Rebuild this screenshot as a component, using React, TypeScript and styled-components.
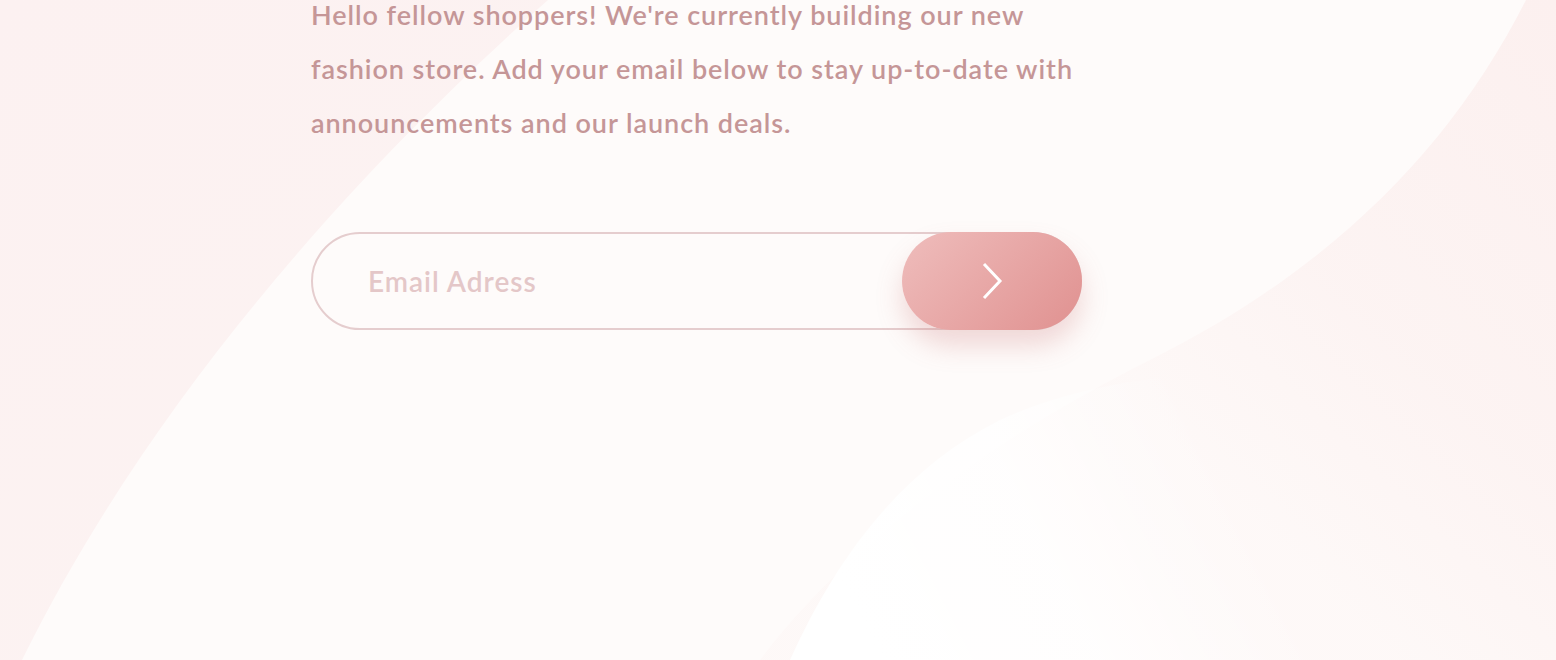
import styled, { createGlobalStyle } from "styled-components";

const GlobalStyle = createGlobalStyle`
  html, body {
    margin: 0;
    padding: 0;
  }
  body {
    font-family: "Lato", "Open Sans", sans-serif;
    background: #fefbfa;
    overflow: hidden;
  }
`;

const Page = styled.main`
  position: relative;
  width: 1556px;
  height: 660px;
  overflow: hidden;
  background: #fefbfa;
`;

const Pattern = styled.svg`
  position: absolute;
  inset: 0;
  width: 100%;
  height: 100%;
  z-index: 0;
  pointer-events: none;
`;

const Content = styled.section`
  position: relative;
  z-index: 1;
  display: flex;
  flex-direction: column;
  width: 771px;
  padding: 0 0 0 311px;
  margin-top: -12px;
`;

const Intro = styled.p`
  margin: 0;
  color: #c59697;
  font-size: 27px;
  line-height: 54px;
  font-weight: 600;
  letter-spacing: 0.95px;
  white-space: nowrap;
`;

const Form = styled.form`
  display: grid;
  grid-template-areas: "stack";
  margin-top: 82px;
  height: 98px;
`;

const EmailInput = styled.input`
  grid-area: stack;
  box-sizing: border-box;
  width: 100%;
  height: 98px;
  border: 2px solid #e5cdce;
  border-radius: 49px;
  background: transparent;
  padding: 0 200px 0 55px;
  font-family: "Lato", "Open Sans", sans-serif;
  font-size: 28px;
  font-weight: 600;
  letter-spacing: 1px;
  color: #c59697;
  outline: none;

  &::placeholder {
    color: #e4c7c8;
    opacity: 1;
  }
`;

const SubmitButton = styled.button`
  grid-area: stack;
  justify-self: end;
  width: 180px;
  height: 98px;
  border: none;
  border-radius: 49px;
  background: linear-gradient(135deg, #efbdbc 0%, #e09190 100%);
  box-shadow: 0 16px 26px rgba(198, 110, 110, 0.25);
  display: flex;
  align-items: center;
  justify-content: center;
  cursor: pointer;
  padding: 0;
`;

const Chevron = () => (
  <svg width="22" height="38" viewBox="0 0 22 38" fill="none">
    <path d="M3 2l16 17L3 36" stroke="#fff" strokeWidth="3" />
  </svg>
);

export default function App() {
  return (
    <Page>
      <GlobalStyle />
      <Pattern viewBox="0 0 1556 660" preserveAspectRatio="none">
        <defs>
          <linearGradient
            id="leftBand"
            gradientUnits="userSpaceOnUse"
            x1="0"
            y1="0"
            x2="500"
            y2="660"
          >
            <stop offset="0%" stopColor="#fcf1f1" />
            <stop offset="100%" stopColor="#fcf3f2" />
          </linearGradient>
          <linearGradient
            id="rightBand"
            gradientUnits="userSpaceOnUse"
            x1="1556"
            y1="0"
            x2="1150"
            y2="420"
          >
            <stop offset="0%" stopColor="#fcf0ef" stopOpacity="1" />
            <stop offset="60%" stopColor="#fcf1f0" stopOpacity="0.75" />
            <stop offset="100%" stopColor="#fcf1f0" stopOpacity="0.25" />
          </linearGradient>
          <linearGradient
            id="arc"
            gradientUnits="userSpaceOnUse"
            x1="850"
            y1="600"
            x2="1200"
            y2="420"
          >
            <stop offset="0%" stopColor="#ffffff" stopOpacity="1" />
            <stop offset="50%" stopColor="#ffffff" stopOpacity="0.8" />
            <stop offset="100%" stopColor="#ffffff" stopOpacity="0" />
          </linearGradient>
        </defs>
        <path d="M0 0 L548 0 C380 150 160 380 22 660 L0 660 Z" fill="url(#leftBand)" />
        <path
          d="M1526 0 C1450 150 1330 270 1150 360 C1000 435 850 540 760 660 L1556 660 L1556 0 Z"
          fill="url(#rightBand)"
        />
        <path
          d="M790 660 C835 560 900 470 1000 420 C1150 350 1400 360 1556 430 L1556 660 Z"
          fill="url(#arc)"
        />
      </Pattern>
      <Content>
        <Intro>
          Hello fellow shoppers! We're currently building our new
          <br />
          fashion store. Add your email below to stay up-to-date with
          <br />
          announcements and our launch deals.
        </Intro>
        <Form onSubmit={(e) => e.preventDefault()}>
          <EmailInput type="email" placeholder="Email Adress" />
          <SubmitButton type="submit" aria-label="Submit">
            <Chevron />
          </SubmitButton>
        </Form>
      </Content>
    </Page>
  );
}
